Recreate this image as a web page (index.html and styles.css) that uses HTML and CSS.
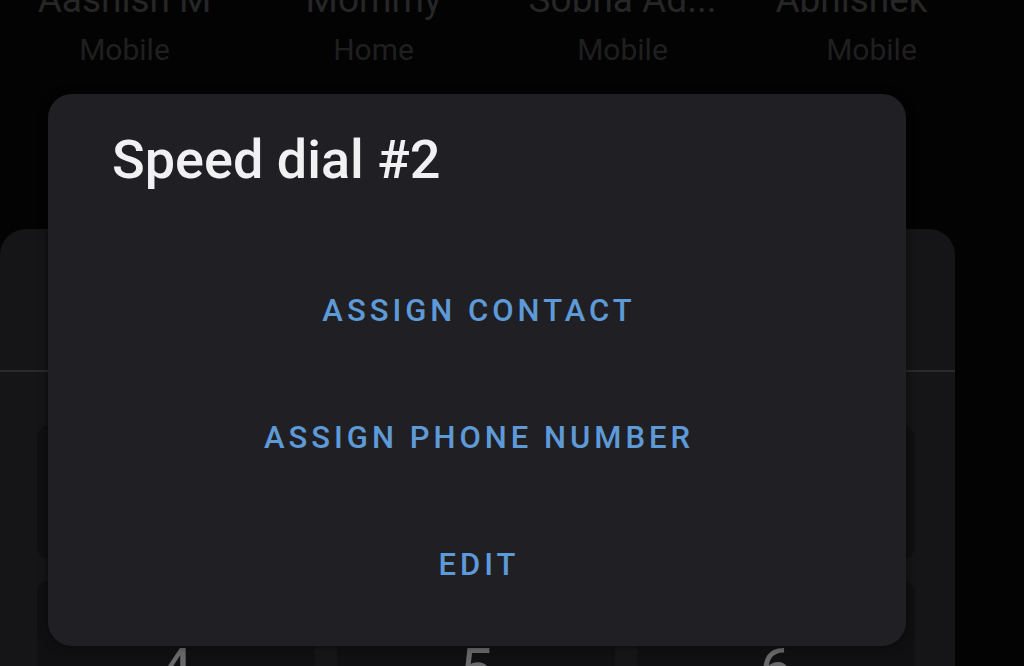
FILE: index.html
```html
<!DOCTYPE html>
<html lang="en">
<head>
<meta charset="utf-8">
<title>Speed dial</title>
<link rel="stylesheet" href="styles.css">
</head>
<body>
  <div class="favorites">
    <div class="fav"><div class="fav-name">Aashish M</div><div class="fav-type">Mobile</div></div>
    <div class="fav"><div class="fav-name">Mommy</div><div class="fav-type">Home</div></div>
    <div class="fav"><div class="fav-name">Sobha Ad...</div><div class="fav-type">Mobile</div></div>
    <div class="fav"><div class="fav-name">Abhishek</div><div class="fav-type">Mobile</div></div>
  </div>

  <div class="dialpad">
    <div class="dialpad-display"></div>
    <div class="dialpad-divider"></div>
    <div class="keys">
      <div class="key"><span class="digit">1</span></div>
      <div class="key"><span class="digit">2</span></div>
      <div class="key"><span class="digit">3</span></div>
      <div class="key"><span class="digit">4</span></div>
      <div class="key"><span class="digit">5</span></div>
      <div class="key"><span class="digit">6</span></div>
    </div>
  </div>

  <div class="dialog">
    <h2 class="dialog-title">Speed dial #2</h2>
    <div class="dialog-actions">
      <button class="action">ASSIGN CONTACT</button>
      <button class="action">ASSIGN PHONE NUMBER</button>
      <button class="action">EDIT</button>
    </div>
  </div>
</body>
</html>
```

FILE: styles.css
```css
* { box-sizing: border-box; }

html, body {
  margin: 0;
  height: 666px;
  overflow: hidden;
}

body {
  background: #030303;
  font-family: Roboto, "Noto Sans", sans-serif;
  display: flex;
  flex-direction: column;
  position: relative;
}

/* favourites strip behind the scrim */
.favorites {
  display: grid;
  grid-template-columns: repeat(4, 249px);
  margin-top: -22px;
}

.fav {
  display: flex;
  flex-direction: column;
  align-items: center;
}

.fav-name {
  font-size: 37px;
  line-height: 44px;
  color: #262627;
  white-space: nowrap;
}

.fav:last-child .fav-name {
  margin-right: 40px;
}

.fav-type {
  margin-top: 10px;
  font-size: 30px;
  line-height: 36px;
  color: #1f1f20;
}

/* dial pad panel */
.dialpad {
  margin-top: 161px;
  width: 955px;
  flex: 1;
  background: #151517;
  border-radius: 26px 26px 0 0;
  display: flex;
  flex-direction: column;
}

.dialpad-display {
  height: 141px;
}

.dialpad-divider {
  height: 2px;
  background: #2a2a2d;
}

.keys {
  display: grid;
  grid-template-columns: repeat(3, 278px);
  grid-auto-rows: 135px;
  column-gap: 22px;
  row-gap: 20px;
  padding: 53px 0 0 37px;
}

.key {
  background: #101012;
  border-radius: 14px;
  display: flex;
  justify-content: center;
  padding-top: 60px;
}

.digit {
  font-size: 60px;
  line-height: 60px;
  color: #68686a;
}

/* speed dial dialog */
.dialog {
  position: absolute;
  left: 48px;
  top: 94px;
  width: 858px;
  height: 552px;
  background: #202024;
  border-radius: 24px;
  box-shadow: 0 0 10px rgba(0, 0, 0, 0.55);
  padding-top: 36px;
}

.dialog-title {
  margin: 0;
  padding-left: 64px;
  font-size: 54px;
  line-height: 60px;
  font-weight: 500;
  color: #f1f1f3;
}

.dialog-actions {
  margin-top: 57px;
  display: flex;
  flex-direction: column;
}

.action {
  height: 127px;
  border: 0;
  background: transparent;
  font-family: Roboto, "Noto Sans", sans-serif;
  font-size: 31px;
  font-weight: 500;
  letter-spacing: 4px;
  padding: 0 0 0 4px;
  color: #5e9ad7;
}
```
